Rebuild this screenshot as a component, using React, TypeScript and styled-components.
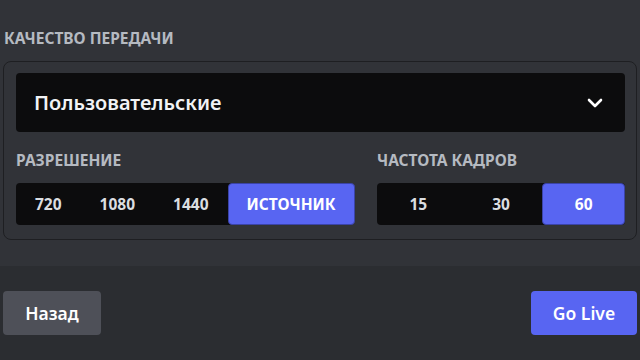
import { FC, useState } from "react";
import styled, { createGlobalStyle } from "styled-components";

const GlobalStyle = createGlobalStyle`
  html, body {
    margin: 0;
    padding: 0;
    background: #313338;
  }
  * {
    box-sizing: border-box;
  }
`;

const Modal = styled.div`
  width: 640px;
  height: 360px;
  display: flex;
  flex-direction: column;
  font-family: "Noto Sans", "Open Sans", sans-serif;
  background: #313338;
  overflow: hidden;
`;

const Body = styled.section`
  flex: 1;
  padding: 28px 3px 0 3px;
`;

const SectionTitle = styled.h2`
  margin: 0 0 13px 1px;
  font-size: 15.5px;
  line-height: 20px;
  font-weight: 700;
  color: #b5bac1;
  text-transform: uppercase;
`;

const Panel = styled.div`
  border: 1px solid #1e1f22;
  border-radius: 8px;
  padding: 11px 11px 14px 12px;
`;

const Select = styled.button`
  width: 100%;
  height: 59px;
  display: flex;
  align-items: center;
  justify-content: space-between;
  padding: 0 22px 0 18px;
  border: none;
  border-radius: 4px;
  background: #0c0c0d;
  color: #f2f3f5;
  font-family: inherit;
  font-size: 20px;
  font-weight: 600;
  cursor: pointer;
`;

const Options = styled.div`
  display: grid;
  grid-template-columns: 337px 248px;
  column-gap: 24px;
  margin-top: 18px;
`;

const Label = styled.h3`
  margin: 0 0 13px 0;
  font-size: 15.5px;
  line-height: 20px;
  font-weight: 700;
  color: #b5bac1;
  text-transform: uppercase;
`;

const Segmented = styled.div`
  display: flex;
  height: 42px;
  border-radius: 4px;
  background: #0c0c0d;
`;

const Segment = styled.button<{ $active?: boolean; $equal?: boolean }>`
  flex: ${(p) => (p.$equal ? "1 1 0" : "1 1 auto")};
  padding: 0 18px;
  border: 1px solid ${(p) => (p.$active ? "#3b44a8" : "transparent")};
  border-radius: 4px;
  background: ${(p) => (p.$active ? "#5865f2" : "transparent")};
  color: ${(p) => (p.$active ? "#ffffff" : "#dbdee1")};
  font-family: inherit;
  font-size: 15.5px;
  font-weight: 700;
  text-transform: uppercase;
  cursor: pointer;
`;

const Footer = styled.footer`
  height: 94px;
  display: flex;
  align-items: center;
  justify-content: space-between;
  padding: 0 3px 0 3px;
  background: #2b2d31;
`;

const Button = styled.button<{ $primary?: boolean }>`
  height: 44px;
  width: ${(p) => (p.$primary ? "106px" : "98px")};
  border: none;
  border-radius: 4px;
  background: ${(p) => (p.$primary ? "#5865f2" : "#4e5058")};
  color: #ffffff;
  font-family: inherit;
  font-size: 17.5px;
  font-weight: 600;
  cursor: pointer;
`;

const Chevron: FC = () => (
  <svg width="16" height="10" viewBox="0 0 16 10" fill="none">
    <path
      d="M2 2l6 6 6-6"
      stroke="#ffffff"
      strokeWidth="2.6"
      strokeLinecap="round"
      strokeLinejoin="round"
    />
  </svg>
);

const resolutions = ["720", "1080", "1440", "Источник"];
const framerates = ["15", "30", "60"];

export default function App() {
  const [resolution, setResolution] = useState("Источник");
  const [fps, setFps] = useState("60");

  return (
    <>
      <GlobalStyle />
      <Modal>
        <Body>
          <SectionTitle>Качество передачи</SectionTitle>
          <Panel>
            <Select>
              <span>Пользовательские</span>
              <Chevron />
            </Select>
            <Options>
              <div>
                <Label>Разрешение</Label>
                <Segmented>
                  {resolutions.map((r) => (
                    <Segment key={r} $active={r === resolution} onClick={() => setResolution(r)}>
                      {r}
                    </Segment>
                  ))}
                </Segmented>
              </div>
              <div>
                <Label>Частота кадров</Label>
                <Segmented>
                  {framerates.map((f) => (
                    <Segment key={f} $equal $active={f === fps} onClick={() => setFps(f)}>
                      {f}
                    </Segment>
                  ))}
                </Segmented>
              </div>
            </Options>
          </Panel>
        </Body>
        <Footer>
          <Button>Назад</Button>
          <Button $primary>Go Live</Button>
        </Footer>
      </Modal>
    </>
  );
}
